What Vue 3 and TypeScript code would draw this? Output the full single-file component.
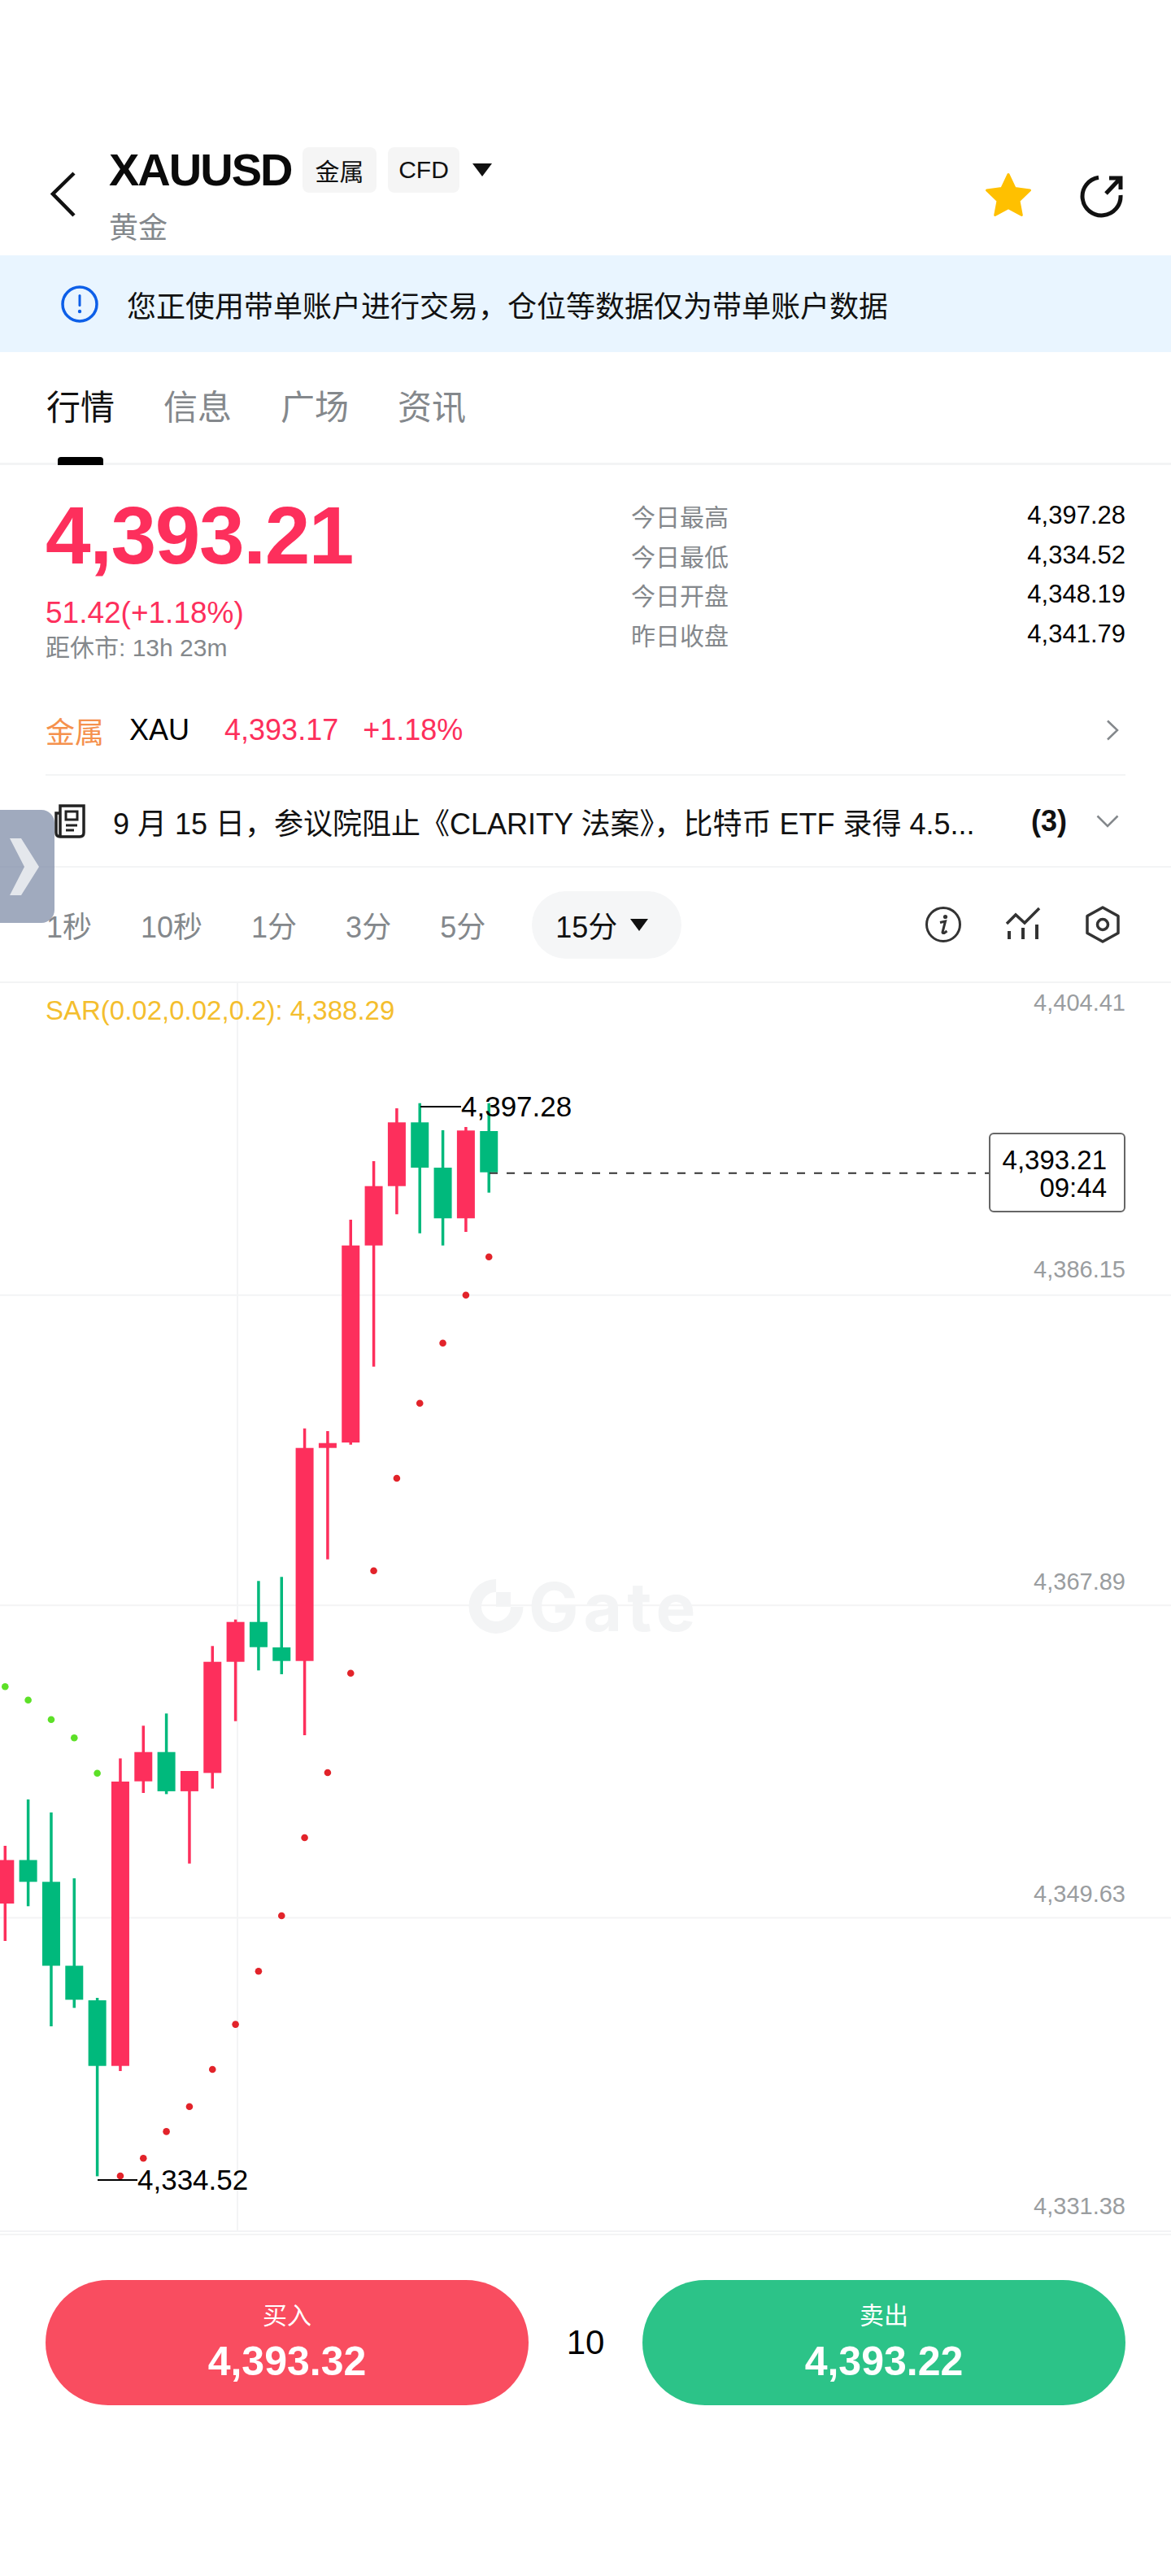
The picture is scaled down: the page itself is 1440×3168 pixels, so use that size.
<template>
  <div class="page">
    <header class="header">
      <svg class="back" viewBox="0 0 32 56" width="32" height="56">
        <path d="M29 2 3 27.500 29 54" fill="none" stroke="#111" stroke-width="4.500" />
      </svg>
      <div class="title-col">
        <div class="title-row">
          <span class="symbol">XAUUSD</span>
          <span class="tag tag-metal">金属</span>
          <span class="tag tag-cfd">CFD</span>
          <span class="caret caret-lg"></span>
        </div>
        <div class="subtitle">黄金</div>
      </div>
      <svg class="star" viewBox="0 0 60 56" width="60" height="56">
        <path d="M30 3.500 38 20.500 56.500 23 43 36 46.300 53.500 30 44.800 13.700 53.500 17 36 3.500 23 22 20.500Z" fill="#ffc000" stroke="#ffc000" stroke-width="3" stroke-linejoin="round" />
      </svg>
      <svg class="share" viewBox="0 0 56 56" width="56" height="56">
        <path d="M24 5.200A23.500 23.500 0 1 0 51 27" fill="none" stroke="#111" stroke-width="5" />
        <path d="M37 6H51V20M51 6 33 25" fill="none" stroke="#111" stroke-width="5" />
      </svg>
    </header>

    <div class="banner">
      <svg viewBox="0 0 46 46" width="46" height="46">
        <circle cx="23" cy="23" r="21" fill="none" stroke="#0d5fe8" stroke-width="3.500" />
        <rect x="21.500" y="11" width="3" height="15" rx="1.500" fill="#0d5fe8" />
        <circle cx="23" cy="32" r="2.200" fill="#0d5fe8" />
      </svg>
      <span>您正使用带单账户进行交易，仓位等数据仅为带单账户数据</span>
    </div>

    <nav class="tabs">
      <span v-for="(tab, i) in tabs" :key="tab" class="tab" :class="{ active: i === 0 }">{{ tab }}</span>
    </nav>

    <section class="quote">
      <div class="quote-left">
        <div class="price">4,393.21</div>
        <div class="change">51.42(+1.18%)</div>
        <div class="close-in">距休市: 13h 23m</div>
      </div>
      <div class="stats">
        <div v-for="row in stats" :key="row.label" class="stat">
          <span class="stat-label">{{ row.label }}</span>
          <span>{{ row.value }}</span>
        </div>
      </div>
    </section>

    <div class="asset-row">
      <span class="asset-kind">金属</span>
      <span class="asset-name">XAU</span>
      <span class="asset-price">4,393.17</span>
      <span class="asset-pct">+1.18%</span>
      <svg class="asset-arrow" viewBox="0 0 16 26" width="16" height="26">
        <path d="M2 1.500 14 13 2 24.500" fill="none" stroke="#84888c" stroke-width="2.500" />
      </svg>
    </div>

    <div class="notice">
      <svg class="notice-icon" viewBox="0 0 40 44" width="40" height="44">
        <path d="M8 12H3V36Q3 41 8 41H32Q37 41 37 36V3H8V41" fill="none" stroke="#222" stroke-width="3.500" />
        <rect x="15" y="10" width="14" height="10" fill="none" stroke="#222" stroke-width="3" />
        <path d="M15 27H29M15 33H25" fill="none" stroke="#222" stroke-width="3" />
      </svg>
      <span class="notice-text">9 月 15 日，参议院阻止《CLARITY 法案》，比特币 ETF 录得 4.5...</span>
      <span class="notice-count">(3)</span>
      <svg class="notice-arrow" viewBox="0 0 28 16" width="28" height="16">
        <path d="M1.500 1.500 14 14 26.500 1.500" fill="none" stroke="#84888c" stroke-width="2.500" />
      </svg>
    </div>

    <div class="frames">
      <span v-for="f in frames" :key="f" class="frame">{{ f }}</span>
      <span class="frame-pill">15分<span class="caret caret-sm"></span></span>
      <div class="tools">
        <svg viewBox="0 0 44 44" width="44" height="44">
          <circle cx="22" cy="22" r="20.500" fill="none" stroke="#333" stroke-width="3" />
          <circle cx="24.500" cy="12.500" r="2.600" fill="#333" />
          <path d="M18 19.500 24.500 18 21 31.500Q21 33 23 32.500L26.500 30" fill="none" stroke="#333" stroke-width="3" />
        </svg>
        <svg viewBox="0 0 44 44" width="44" height="44">
          <path d="M2 21 13 10 24 20 42 2" fill="none" stroke="#333" stroke-width="3.500" />
          <path d="M5 30V40M22 26V40M39 22V40" fill="none" stroke="#333" stroke-width="4" />
        </svg>
        <svg viewBox="0 0 44 46" width="44" height="46">
          <path d="M22 2 41 12.500V33.500L22 44 3 33.500V12.500Z" fill="none" stroke="#333" stroke-width="3.500" stroke-linejoin="round" />
          <circle cx="22" cy="23" r="6.500" fill="none" stroke="#333" stroke-width="3.500" />
        </svg>
      </div>
    </div>

    <div class="chart">
      <svg class="chart-svg" viewBox="0 1209 1440 1534" width="1440" height="1534">
        <g stroke="#f3f4f5" stroke-width="2">
          <line v-for="y in gridY" :key="y" x1="0" x2="1440" :y1="y" :y2="y" />
          <line x1="292" x2="292" y1="1209" y2="2743" />
        </g>
        <path d="M610 1942A33.500 33.500 0 1 0 643.500 1976H628A18 18 0 1 1 610 1958Z" fill="#f3f4f5" />
        <rect x="610" y="1958" width="18" height="18" fill="#f3f4f5" />
        <text x="650" y="2006" class="wordmark">Gate</text>

        <g v-for="(c, i) in candles" :key="i" :fill="c[4] === 'r' ? '#fd2f5c' : '#00b97c'">
          <rect :x="xAt(i) - 1.750" :y="c[0]" width="3.500" :height="c[3] - c[0]" />
          <rect :x="xAt(i) - 11" :y="c[1]" width="22" :height="c[2] - c[1]" />
        </g>

        <circle v-for="(y, i) in greenDots" :key="'g' + i" :cx="xAt(i)" :cy="y" r="4.300" fill="#5ce027" />
        <circle v-for="(y, i) in redDots" :key="'r' + i" :cx="xAt(i + 5)" :cy="y" r="4.300" fill="#e2232a" />

        <line x1="517" x2="567" y1="1361" y2="1361" stroke="#000" stroke-width="2" />
        <line x1="120" x2="169" y1="2681" y2="2681" stroke="#000" stroke-width="2" />
        <line x1="602" x2="1216" y1="1442.700" y2="1442.700" stroke="#333" stroke-width="2" stroke-dasharray="10 11" />
      </svg>

      <span v-for="l in axis" :key="l.text" class="axis" :style="{ top: l.y - 1209 + 'px' }">{{ l.text }}</span>
      <span class="sar">SAR(0.02,0.02,0.2): 4,388.29</span>
      <span class="mark mark-high">4,397.28</span>
      <span class="mark mark-low">4,334.52</span>
      <div class="now">
        <span>4,393.21</span>
        <span>09:44</span>
      </div>
    </div>

    <footer class="footer">
      <button class="trade buy"><span class="trade-label">买入</span><span class="trade-price">4,393.32</span></button>
      <span class="spread">10</span>
      <button class="trade sell"><span class="trade-label">卖出</span><span class="trade-price">4,393.22</span></button>
    </footer>

    <div class="handle">
      <svg viewBox="0 0 40 70" width="40" height="70">
        <path d="M2 0H16L38 35 16 70H2L20 35Z" fill="#e4e7ec" />
      </svg>
    </div>
  </div>
</template>

<script setup lang="ts">
type Candle = [number, number, number, number, "r" | "g"];

const tabs = ["行情", "信息", "广场", "资讯"];
const frames = ["1秒", "10秒", "1分", "3分", "5分"];
const stats = [
  {label: "今日最高", value: "4,397.28"},
  {label: "今日最低", value: "4,334.52"},
  {label: "今日开盘", value: "4,348.19"},
  {label: "昨日收盘", value: "4,341.79"},
];

const gridY = [1592.7, 1974.3, 2358.6];
const axis = [
  {text: "4,404.41", y: 1233},
  {text: "4,386.15", y: 1561},
  {text: "4,367.89", y: 1945},
  {text: "4,349.63", y: 2329},
  {text: "4,331.38", y: 2713},
];

// wick top, body top, body bottom, wick bottom, colour
const candles: Candle[] = [
  [2270, 2287.5, 2341, 2387, "r"],
  [2213, 2287.5, 2314.3, 2344.3, "g"],
  [2229, 2314.3, 2417.5, 2492, "g"],
  [2310, 2417.5, 2459.3, 2469.3, "g"],
  [2457, 2460, 2540.7, 2676.4, "g"],
  [2162.5, 2191, 2540.7, 2547, "r"],
  [2122.3, 2154.7, 2190.7, 2205, "r"],
  [2107.3, 2154.7, 2202.9, 2206.4, "g"],
  [2178, 2178, 2202.9, 2291.8, "r"],
  [2024.3, 2043.7, 2180.4, 2199.6, "r"],
  [1991.7, 1994.7, 2043.7, 2116.7, "r"],
  [1944.3, 1994.7, 2025.7, 2054.3, "g"],
  [1939.3, 2026, 2042.7, 2059, "g"],
  [1756.7, 1780.7, 2042.7, 2134, "r"],
  [1760, 1774.7, 1780.7, 1917.7, "r"],
  [1500, 1531.7, 1774, 1776.7, "r"],
  [1428, 1458.7, 1531.7, 1680.7, "r"],
  [1363, 1380.3, 1458.7, 1493.3, "r"],
  [1356.7, 1380.3, 1436, 1516.7, "g"],
  [1390, 1436, 1498.3, 1531.7, "g"],
  [1386, 1390.3, 1498.3, 1515, "r"],
  [1356.7, 1391, 1441.7, 1466.7, "g"],
];

const greenDots = [2074.3, 2090.7, 2114.7, 2137.3, 2180.7];
const redDots = [2676, 2654.3, 2621.4, 2590.7, 2545, 2489.6, 2424.3, 2356, 2260, 2180, 2057.7, 1931.7, 1818, 1725.7, 1651.7, 1592.7, 1545.7];

function xAt(i: number) {
  return 6.3 + 28.33 * i;
}
</script>

<style>
body {
  background: #fff;
}
</style>

<style scoped>
.page {
  position: relative;
  display: flex;
  flex-direction: column;
  width: 1440px;
  height: 3168px;
  overflow: hidden;
  background: #fff;
  color: #000;
  font-family: "Liberation Sans", "Noto Sans CJK SC", sans-serif;
}

.header {
  display: flex;
  align-items: flex-start;
  height: 314px;
  padding: 181px 56px 0 62px;
  box-sizing: border-box;
}

.back {
  margin: 30px 40px 0 0;
}

.title-row {
  display: flex;
  align-items: center;
  height: 56px;
}

.symbol {
  width: 238px;
  font-size: 56px;
  font-weight: 700;
  letter-spacing: -2px;
  line-height: 56px;
  color: #0a0a0a;
}

.tag {
  display: flex;
  align-items: center;
  justify-content: center;
  height: 56px;
  border-radius: 8px;
  background: #f5f5f5;
  font-size: 30px;
  color: #111;
}

.tag-metal {
  width: 91px;
  margin-right: 14px;
}

.tag-cfd {
  width: 88px;
  margin-right: 16px;
}

.caret {
  display: inline-block;
  width: 0;
  height: 0;
  border-style: solid;
  border-color: #111 transparent transparent;
}

.caret-lg {
  border-width: 16px 12px 0;
}

.caret-sm {
  margin-left: 16px;
  border-width: 15px 11px 0;
}

.subtitle {
  margin-top: 22px;
  font-size: 36px;
  line-height: 44px;
  color: #84888c;
}

.star {
  margin: 30px 0 0 auto;
}

.share {
  margin: 32px 1px 0 57px;
}

.banner {
  display: flex;
  align-items: center;
  gap: 35px;
  height: 119px;
  padding-left: 75px;
  background: #e9f5ff;
  font-size: 36px;
  color: #111;
}

.tabs {
  display: flex;
  gap: 60px;
  height: 139px;
  padding: 46px 0 0 57px;
  box-sizing: border-box;
  border-bottom: 3px solid #f3f4f5;
}

.tab {
  position: relative;
  font-size: 42px;
  line-height: 46px;
  color: #84888c;
}

.tab.active {
  color: #111;
}

.tab.active::after {
  content: "";
  position: absolute;
  left: 14px;
  top: 83px;
  width: 56px;
  height: 10px;
  border-radius: 4px 4px 0 0;
  background: #000;
}

.quote {
  display: flex;
  justify-content: space-between;
  height: 272px;
  padding: 36px 56px 0;
  box-sizing: border-box;
}

.price {
  font-size: 100px;
  font-weight: 700;
  line-height: 100px;
  letter-spacing: -1.400px;
  color: #fd2f5c;
}

.change {
  margin-top: 26px;
  font-size: 37px;
  line-height: 40px;
  color: #fd2f5c;
}

.close-in {
  margin-top: 5px;
  font-size: 30px;
  line-height: 36px;
  color: #84888c;
}

.stats {
  width: 608px;
  padding-top: 2px;
}

.stat {
  display: flex;
  justify-content: space-between;
  align-items: center;
  height: 48.500px;
  font-size: 31px;
}

.stat-label {
  font-size: 30px;
  color: #84888c;
}

.asset-row {
  display: flex;
  align-items: center;
  height: 108px;
  margin: 0 56px;
  border-bottom: 2px solid #f3f4f5;
  font-size: 36px;
}

.asset-kind {
  margin-right: 31px;
  color: #f5914d;
}

.asset-name {
  margin-right: 43px;
}

.asset-price {
  margin-right: 30px;
  color: #fd2f5c;
}

.asset-pct {
  color: #fd2f5c;
}

.asset-arrow {
  margin: 0 8px 0 auto;
}

.notice {
  display: flex;
  align-items: center;
  height: 113px;
  padding: 0 64px 0 66px;
  box-sizing: border-box;
  border-bottom: 2px solid #f3f4f5;
  font-size: 36px;
  color: #111;
}

.notice-icon {
  margin-right: 33px;
}

.notice-text {
  white-space: nowrap;
}

.notice-count {
  margin-left: auto;
  font-weight: 700;
}

.notice-arrow {
  margin-left: 36px;
}

.frames {
  display: flex;
  align-items: center;
  gap: 60px;
  height: 142px;
  padding: 0 62px 0 57px;
  box-sizing: border-box;
  border-bottom: 2px solid #f3f4f5;
  font-size: 36px;
}

.frame {
  color: #84888c;
}

.frame-pill {
  display: flex;
  align-items: center;
  height: 83px;
  margin-left: -3px;
  padding: 0 41px 0 29px;
  border-radius: 42px;
  background: #f5f6f7;
  color: #111;
}

.tools {
  display: flex;
  align-items: center;
  gap: 54px;
  margin-left: auto;
}

.chart {
  position: relative;
  height: 1534px;
  border-bottom: 2px solid #f3f4f5;
}

.chart-svg {
  display: block;
}

.wordmark {
  font-family: Inter, sans-serif;
  font-size: 82px;
  font-weight: 700;
  letter-spacing: 6px;
  fill: #f3f4f5;
}

.axis {
  position: absolute;
  right: 56px;
  transform: translateY(-50%);
  font-size: 29px;
  color: #9a9da0;
}

.sar {
  position: absolute;
  left: 56px;
  top: 15px;
  font-size: 33px;
  line-height: 38px;
  color: #f4be2e;
}

.mark {
  position: absolute;
  font-size: 35px;
  line-height: 40px;
}

.mark-high {
  left: 567px;
  top: 132px;
}

.mark-low {
  left: 169px;
  top: 1452px;
}

.now {
  position: absolute;
  right: 56px;
  top: 184px;
  display: flex;
  flex-direction: column;
  align-items: flex-end;
  box-sizing: border-box;
  width: 168px;
  height: 98px;
  padding: 15px 21px 0 0;
  border: 2px solid #666;
  border-radius: 6px;
  background: #fff;
  font-size: 33px;
  line-height: 34px;
}

.footer {
  display: flex;
  align-items: center;
  justify-content: space-between;
  margin-top: 2px;
  padding: 55px 56px 0;
  border-top: 2px solid #f3f4f5;
}

.trade {
  display: flex;
  flex-direction: column;
  align-items: center;
  width: 594px;
  height: 154px;
  padding: 25px 0 0;
  border: 0;
  border-radius: 77px;
  color: #fff;
  font-family: inherit;
}

.buy {
  background: #f94d60;
}

.sell {
  background: #2cc388;
}

.trade-label {
  font-size: 30px;
  line-height: 38px;
}

.trade-price {
  margin-top: 8px;
  font-size: 50px;
  font-weight: 700;
  line-height: 58px;
}

.spread {
  font-size: 42px;
}

.handle {
  position: absolute;
  left: 0;
  top: 996px;
  display: flex;
  align-items: center;
  width: 67px;
  height: 139px;
  padding-left: 10px;
  box-sizing: border-box;
  border-radius: 0 16px 16px 0;
  background: rgba(128, 142, 168, 0.75);
}
</style>
